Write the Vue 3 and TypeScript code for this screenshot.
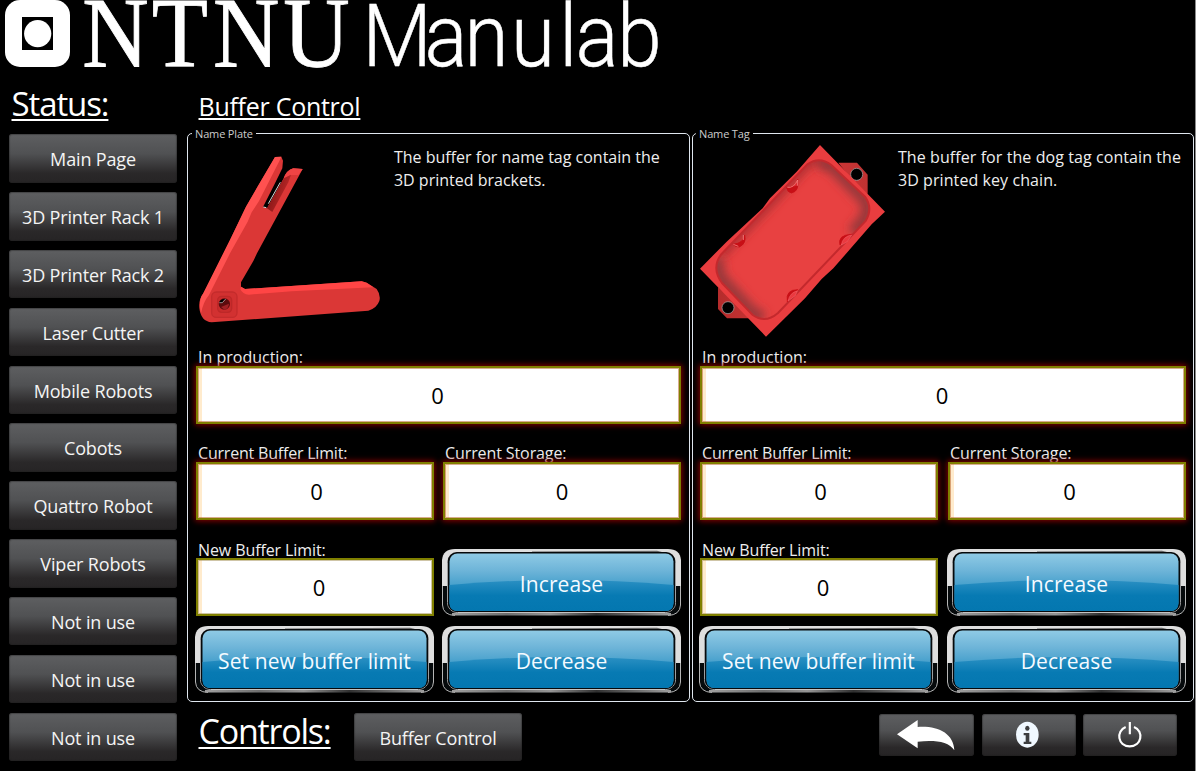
<script setup lang="ts">
interface Panel {
  title: string
  model: 'bracket' | 'tag'
  lines: string[]
  production: number
  limit: number
  storage: number
  next: number
}

const stations: string[] = [
  'Main Page',
  '3D Printer Rack 1',
  '3D Printer Rack 2',
  'Laser Cutter',
  'Mobile Robots',
  'Cobots',
  'Quattro Robot',
  'Viper Robots',
  'Not in use',
  'Not in use',
  'Not in use',
]

const panels: Panel[] = [
  {
    title: 'Name Plate',
    model: 'bracket',
    lines: ['The buffer for name tag contain the', '3D printed brackets.'],
    production: 0,
    limit: 0,
    storage: 0,
    next: 0,
  },
  {
    title: 'Name Tag',
    model: 'tag',
    lines: ['The buffer for the dog tag contain the', '3D printed key chain.'],
    production: 0,
    limit: 0,
    storage: 0,
    next: 0,
  },
]

const actions = [
  { key: 'increase', label: 'Increase' },
  { key: 'set', label: 'Set new buffer limit' },
  { key: 'decrease', label: 'Decrease' },
]
</script>

<template>
  <div class="screen">
    <svg class="defs" width="0" height="0" aria-hidden="true">
      <defs>
        <linearGradient id="gloss" x1="0" y1="0" x2="0" y2="1">
          <stop offset="0" stop-color="#8fcae5" />
          <stop offset="0.3" stop-color="#6db4d8" />
          <stop offset="0.62" stop-color="#3d9bc9" />
          <stop offset="1" stop-color="#3d9bc9" />
        </linearGradient>
        <linearGradient id="deep" x1="0" y1="0" x2="0" y2="1">
          <stop offset="0" stop-color="#2b90c3" />
          <stop offset="0.5" stop-color="#077ab3" />
          <stop offset="1" stop-color="#0477b0" />
        </linearGradient>
        <linearGradient id="rim" x1="0" y1="0" x2="1" y2="0">
          <stop offset="0" stop-color="#a0a0a0" />
          <stop offset="0.25" stop-color="#6e6e6e" />
          <stop offset="0.45" stop-color="#959595" />
          <stop offset="0.66" stop-color="#303030" />
          <stop offset="0.85" stop-color="#6e6e6e" />
          <stop offset="1" stop-color="#a0a0a0" />
        </linearGradient>
        <linearGradient id="slot" x1="0" y1="0" x2="1" y2="0.5">
          <stop offset="0" stop-color="#6d0d0d" />
          <stop offset="1" stop-color="#c52b2b" />
        </linearGradient>
        <linearGradient id="tab" x1="0" y1="0" x2="1" y2="0">
          <stop offset="0" stop-color="#b42c2c" />
          <stop offset="0.5" stop-color="#d93a3a" />
          <stop offset="1" stop-color="#c03232" />
        </linearGradient>
        <clipPath id="pocket">
          <path d="M352 118Q388 92 424 120L525 215Q550 250 527 288L264 564Q226 597 188 570L96 474Q64 430 92 390Z" />
        </clipPath>
        <filter id="soft" x="-20%" y="-20%" width="140%" height="140%"><feGaussianBlur stdDeviation="14" /></filter>
      </defs>
    </svg>

    <header class="brand">
      <svg width="670" height="85" viewBox="0 0 670 85" fill="#fff">
        <rect x="5" y="0" width="65" height="67" rx="15" />
        <rect x="22" y="17" width="31" height="33" fill="#000" />
        <circle cx="37.7" cy="33.7" r="13.6" />
        <text class="ntnu" x="89.5 165 231.5 308" y="66" transform="scale(.92 1)">NTNU</text>
        <text class="manulab" x="394 461.5 505 555.5 608 625.5 671" y="66" transform="scale(.92 1)">Manulab</text>
      </svg>
    </header>

    <div class="content">
      <nav class="side">
        <h1 class="heading status">Status:</h1>
        <button v-for="(s, i) in stations" :key="i" class="grey">{{ s }}</button>
      </nav>

      <main class="main">
        <h2 class="heading page">Buffer Control</h2>
        <div class="panels">
          <fieldset v-for="p in panels" :key="p.title" class="panel">
            <legend>{{ p.title }}</legend>
            <div class="about">
              <svg v-if="p.model === 'bracket'" class="model" viewBox="30 60 560 600">
                <path fill="#db3736" d="M270 96L289 95 294 107 292 130 270 175 234 246 246 250 296 160Q305 135 325 130L353 132 216 385 205 408 168 472V485L180 492 530 469 545 473 575 492Q588 510 583 528 575 550 550 557L80 592Q48 590 43 550 40 525 55 505L75 465 135 345 183 245 215 190Z" />
                <path fill="#ff5150" d="M270 96L289 95 282 110 222 228 200 262 188 290 135 385 72 510Q55 530 48 565 39 525 55 505L75 465 135 345 183 245 215 190Z" />
                <path fill="#ff4545" d="M168 485L180 492 530 469 545 473 565 487 320 499 192 509Q172 508 166 492Z" />
                <path fill="#f04444" d="M296 160Q305 135 325 130L353 132 340 150 318 150Z" />
                <path fill="url(#slot)" d="M297 160L318 149 310 172 262 261 246 250Z" />
                <path stroke="#fff" stroke-width="2.500" fill="none" d="M235 246L244 248M250 236L286 172" />
                <rect x="80" y="501" width="76" height="76" rx="14" fill="#d23131" stroke="#c42c2c" stroke-width="4" />
                <rect x="98" y="514" width="42" height="48" rx="12" fill="#c92c2c" stroke="#bd2828" stroke-width="4" />
                <circle cx="118" cy="537" r="17" fill="#5d0b0d" />
                <path fill="#000" d="M103 533Q106 520 123 522Q113 527 112 534Z" />
                <path stroke="#fff" stroke-width="1.6" fill="none" d="M103 533L112 533 122 522" />
                <path fill="#a32024" d="M108 546L132 536Q130 553 118 554Z" />
              </svg>
              <svg v-else class="model" viewBox="30 60 560 600">
                <path fill="url(#tab)" d="M445 113H501L533 149V206L520 208ZM84 486V552L111 580H176V570Z" />
                <circle cx="500" cy="148" r="18" stroke="#aaa" stroke-width="2" />
                <circle cx="114" cy="548" r="18" stroke="#aaa" stroke-width="2" />
                <path fill="#e93d3f" d="M390 60L585 260 545 298 430 430 395 462 345 520 228 635 30 431 110 350 218 250 240 220 320 140Z" />
                <g clip-path="url(#pocket)">
                  <rect x="60" y="80" width="500" height="520" fill="#e84141" />
                  <path filter="url(#soft)" fill="none" stroke="#a02c2f" stroke-width="22" d="M92 390L352 118Q388 92 424 120" />
                  <path filter="url(#soft)" fill="none" stroke="#96383a" stroke-width="40" d="M390 112L424 120 520 218Q548 250 522 286L490 325M90 398Q68 430 100 470L188 566 220 578" />
                </g>
                <path fill="none" stroke="#c4292d" stroke-width="6" d="M352 118Q388 92 424 120L525 215Q550 250 527 288L264 564Q226 597 188 570L96 474Q64 430 92 390Z" />
                <g stroke-width="2.5">
                  <path fill="#c80f16" stroke="#c80f16" d="M290 188Q322 186 323 163Q329 198 305 204 292 202 290 188ZM129 358Q162 354 164 330Q170 356 148 366 136 366 129 358Z" />
                  <path fill="#dc2830" stroke="#f58080" d="M292 187Q312 190 323 165L323 182M130 358L145 364M160 330V345" />
                  <path fill="#c80f16" stroke="#c80f16" d="M450 360Q442 330 485 328Q472 331 466 345ZM292 530Q286 494 323 494Q310 500 304 512Z" />
                  <path fill="#ea3a40" stroke="#f46a70" stroke-width="1.5" d="M454 360Q458 334 485 330L472 350ZM294 528Q300 502 322 498L316 512Z" />
                </g>
              </svg>
              <p class="text"><span v-for="l in p.lines" :key="l">{{ l }}</span></p>
            </div>

            <div class="grid">
              <label class="cell wide">
                <span class="cap">In production:</span>
                <output class="field glow">{{ p.production }}</output>
              </label>
              <label class="cell">
                <span class="cap tight">Current Buffer Limit:</span>
                <output class="field glow limit">{{ p.limit }}</output>
              </label>
              <label class="cell">
                <span class="cap storage-cap">Current Storage:</span>
                <output class="field glow storage">{{ p.storage }}</output>
              </label>
              <label class="cell">
                <span class="cap low">New Buffer Limit:</span>
                <output class="field next">{{ p.next }}</output>
              </label>
              <button v-for="a in actions" :key="a.key" class="blue">
                <svg class="face" width="239" height="67" viewBox="0 0 239 67">
                  <path fill="#dedede" d="M0 38V11Q1 0 13 0H226Q238 0 239 11V38Z" />
                  <path fill="#060a0c" d="M0.5 37H238.5V56Q238 66 226 66.5H13Q1 66 .5 56Z" />
                  <path fill="none" stroke="#b5b5b5" d="M.5 37V56Q1 66 13 66.5M238.5 37V56Q238 66 226 66.5" />
                  <path fill="none" stroke="url(#rim)" stroke-width="2.4" d="M10 65.3L229 65.2" />
                  <path fill="#666" d="M90 2.600L215 1.800 222 3.500H90Z" />
                  <rect x="5.5" y="3.5" width="228" height="60" rx="10" fill="#000" stroke="#c4c4c4" />
                  <rect x="5.8" y="3" width="227.4" height="60" rx="9" fill="#06090b" />
                  <rect x="7.5" y="4.5" width="224" height="57.5" rx="8" fill="url(#gloss)" />
                  <path fill="url(#deep)" d="M7.5 36Q119 26 231.5 36V54Q231.5 62 223.500 62H15.500Q7.500 62 7.500 54Z" />
                </svg>
                <span class="word">{{ a.label }}</span>
              </button>
            </div>
          </fieldset>
        </div>

        <footer class="controls">
          <h1 class="heading ctl">Controls:</h1>
          <button class="grey">Buffer Control</button>
          <div class="tools">
            <button class="grey tool back" aria-label="Back">
              <svg width="94" height="42" viewBox="0 0 282 126"><path fill="#fff" d="M54 61L116 18V39C177 35 224 58 226 109C209 82 167 78 116 83V103Z" /></svg>
            </button>
            <button class="grey tool" aria-label="Information">
              <svg width="94" height="42" viewBox="0 0 282 126">
                <ellipse cx="136" cy="62" rx="34" ry="39" fill="#f0f8ff" />
                <ellipse cx="136" cy="43" rx="6.500" ry="7.500" fill="#3d3e40" />
                <path fill="#3d3e40" d="M125 57H142V83H148V90H125V83H131V64H125Z" />
              </svg>
            </button>
            <button class="grey tool power" aria-label="Power">
              <svg width="94" height="42" viewBox="0 0 282 126" fill="none" stroke="#fff" stroke-width="6.500">
                <path d="M128 39C98 51 104 97 140 97S184 51 153 39M140.500 24V61" />
              </svg>
            </button>
          </div>
        </footer>
      </main>
    </div>
  </div>
</template>

<style>
body {
  background: #000;
}
</style>

<style scoped>
.screen {
  box-sizing: border-box;
  width: 1196px;
  height: 771px;
  overflow: hidden;
  background: #000;
  border-right: 1px solid #8b8b8b;
  color: #fff;
  font-family: 'Open Sans', 'Noto Sans', sans-serif;
}
.defs {
  position: absolute;
}
.brand {
  height: 85px;
}
.brand svg {
  display: block;
  overflow: visible;
}
.ntnu {
  font: 100px 'Liberation Serif', serif;
  stroke: #fff;
  stroke-width: 0.8px;
}
.manulab {
  font: 300 87px Roboto, sans-serif;
  stroke: #fff;
  stroke-width: 0.5px;
}
.content {
  display: flex;
}
.side {
  box-sizing: border-box;
  width: 187px;
  padding-left: 9px;
  display: flex;
  flex-direction: column;
  gap: 9.4px;
}
.heading {
  margin: 0;
  font-weight: 400;
  white-space: nowrap;
  text-decoration: underline;
  text-decoration-skip-ink: none;
}
.status {
  align-self: flex-start;
  height: 39.9px;
  padding-left: 2.5px;
  font-size: 33px;
  line-height: 38px;
  letter-spacing: -1.1px;
  text-decoration-thickness: 2px;
  text-underline-offset: 3px;
}
button {
  display: block;
  margin: 0;
  padding: 0;
  border: 0;
  background: none;
  color: #fff;
  font-family: inherit;
}
.grey {
  flex: none;
  width: 168px;
  height: 48.45px;
  border-radius: 3px;
  background: linear-gradient(#5e5f61, #505153 40%, #2a2829 80%, #262425);
  box-shadow: inset 0 0 1px 1px rgba(30, 30, 30, 0.4);
  color: #f4f4f4;
  font-size: 18px;
  letter-spacing: -0.15px;
  line-height: 51px;
  white-space: nowrap;
}
.main {
  width: 1008px;
}
.page {
  height: 42px;
  padding-left: 11.500px;
  font-size: 25px;
  line-height: 43px;
  letter-spacing: -0.27px;
  text-decoration-thickness: 2px;
  text-underline-offset: 2px;
}
.panels {
  display: flex;
  gap: 2px;
}
.panel {
  box-sizing: border-box;
  width: 503px;
  min-width: 0;
  height: 575px;
  margin: 0;
  padding: 0 0 0 8px;
  border: 1px solid #dfe6ee;
  border-radius: 5px;
}
.panel + .panel {
  width: 502px;
  padding-left: 7px;
}
legend {
  height: 13px;
  margin-left: -4px;
  padding: 0 3px;
  color: #ccc;
  font-size: 11px;
  letter-spacing: -0.15px;
  line-height: 14px;
}
.about {
  display: flex;
  height: 205px;
  padding-top: 5px;
  box-sizing: border-box;
}
.model {
  flex: none;
  width: 186.67px;
  height: 200px;
  margin-left: -1px;
}
.panel + .panel .model {
  margin: 0 -1px 0 0;
}
.text {
  margin: 1px 0 0 12.300px;
  font-size: 16px;
  line-height: 23px;
  color: #eee;
}
.panel + .panel .text {
  letter-spacing: 0.08px;
}
.text span {
  display: block;
  white-space: nowrap;
}
.grid {
  display: grid;
  grid-template-columns: 238px 238px;
  grid-template-rows: 79px 79px 79px 67px;
  column-gap: 9px;
  row-gap: 17px;
}
.panel + .panel .grid {
  column-gap: 10px;
}
.cell {
  display: flex;
  flex-direction: column;
}
.wide {
  grid-column: 1 / 3;
}
.cap {
  height: 21px;
  padding-left: 2px;
  font-size: 16px;
  line-height: 25px;
  color: #eee;
}
.tight {
  letter-spacing: -0.2px;
}
.storage-cap {
  letter-spacing: -0.1px;
}
.low {
  letter-spacing: -0.1px;
  line-height: 27px;
}
.field {
  display: block;
  box-sizing: border-box;
  height: 58px;
  border: 2px solid #808000;
  background: linear-gradient(90deg, #ffebcd 4px, #fff 4px);
  box-shadow: inset 0 0 0 1px rgba(160, 140, 80, 0.5);
  color: #000;
  font-size: 22px;
  line-height: 54px;
  text-align: center;
}
.glow {
  box-shadow: inset 0 0 0 1px rgba(180, 90, 30, 0.5), 0 0 6px 1px #8c0000;
}
.wide .field {
  padding-right: 2px;
}
.limit {
  padding-left: 3px;
}
.panel + .panel .storage {
  padding-left: 5px;
}
.next {
  padding-left: 8px;
}
.blue {
  position: relative;
  width: 239px;
  height: 67px;
  margin-left: -1px;
  align-self: end;
}
.blue:nth-last-child(-n + 2) {
  margin-top: -7px;
  align-self: start;
}
.face {
  position: absolute;
  inset: 0;
}
.word {
  position: relative;
  display: block;
  color: #f4faff;
  font-size: 21px;
  letter-spacing: 0.08px;
  line-height: 70px;
  white-space: nowrap;
}
.controls {
  display: flex;
  padding-top: 11px;
}
.ctl {
  box-sizing: border-box;
  width: 167px;
  padding-left: 11.500px;
  font-size: 34px;
  line-height: 36px;
  letter-spacing: -1.2px;
  text-decoration-thickness: 2px;
  text-underline-offset: 3px;
}
.tools {
  display: flex;
  gap: 8px;
  margin-left: auto;
  padding: 1px 18px 0 0;
}
.tool {
  width: 94px;
  height: 42px;
}
.back {
  width: 95px;
}
.power {
  margin-left: -1px;
}
.tool svg {
  display: block;
}
</style>
